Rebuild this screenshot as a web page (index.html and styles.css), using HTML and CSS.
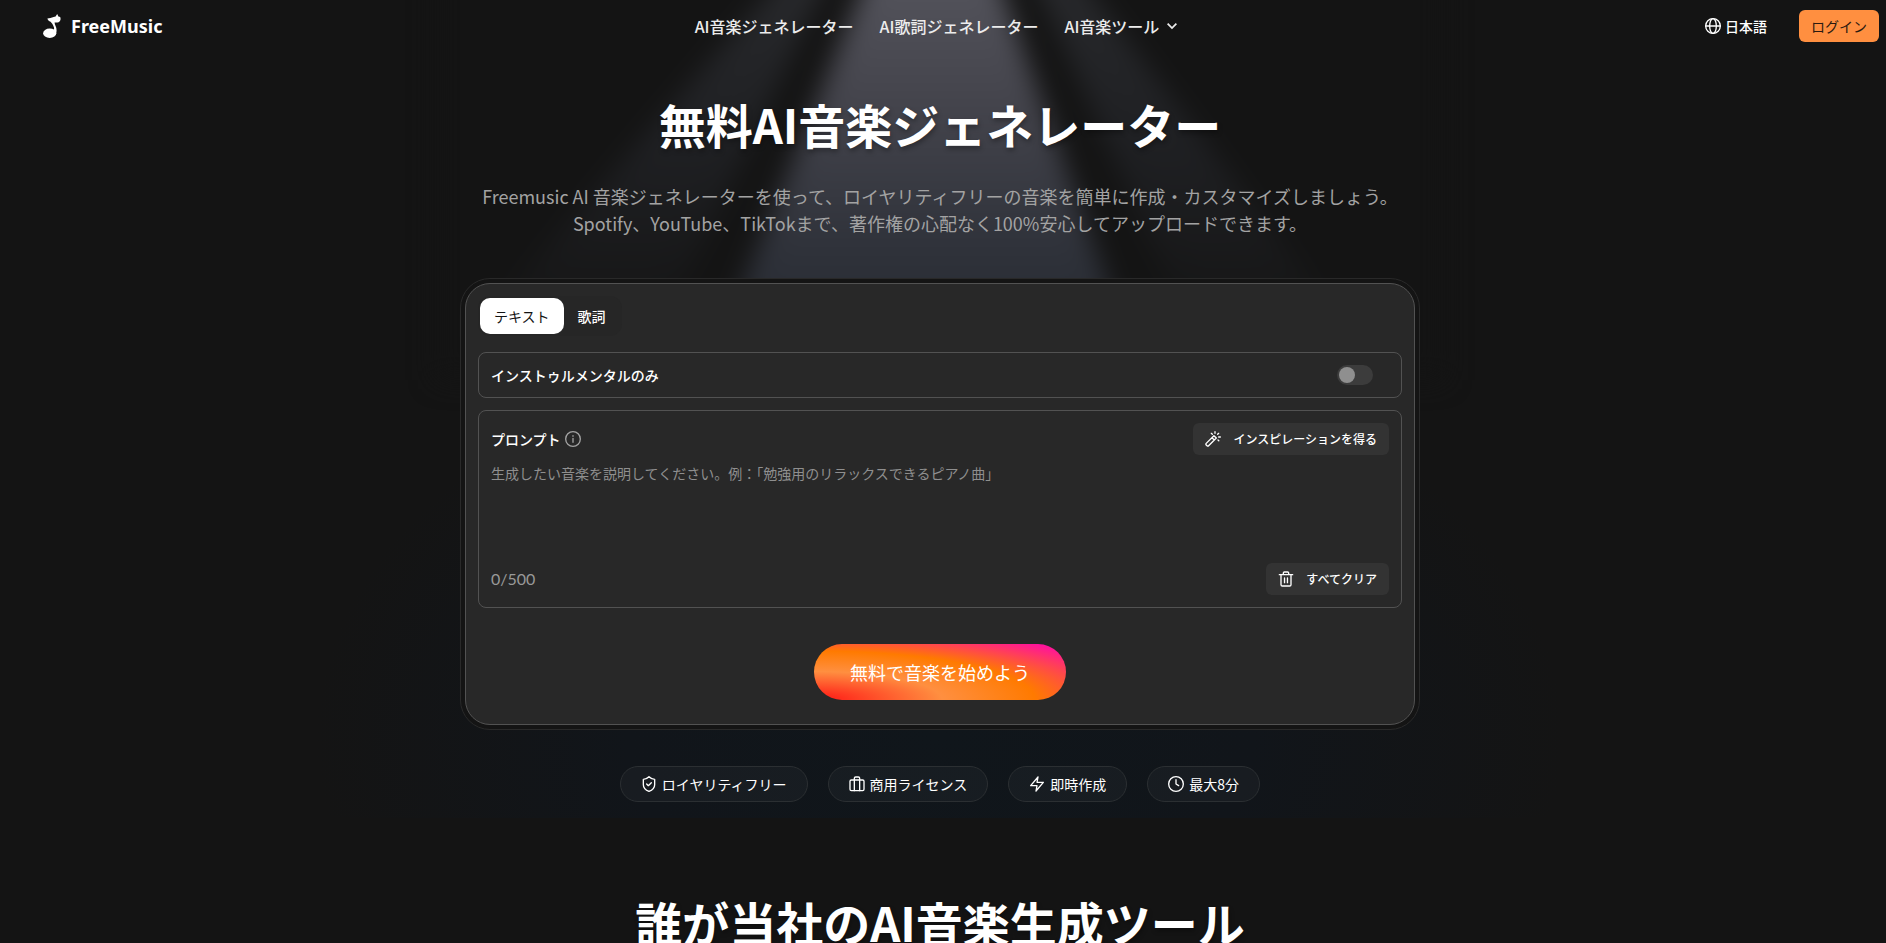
FILE: index.html
```html
<!DOCTYPE html>
<html lang="ja">
<head>
    <meta charset="UTF-8">
    <meta name="viewport" content="width=device-width, initial-scale=1.0">
    <title>FreeMusic</title>
    <link rel="stylesheet" href="styles.css">
</head>
<body>
    <!-- stage light behind the hero -->
    <svg class="stage-light" viewBox="0 0 1248 818" aria-hidden="true">
        <defs>
            <linearGradient id="beam" x1="0" y1="0" x2="0" y2="1">
                <stop offset="0" stop-color="#585860"/>
                <stop offset="0.35" stop-color="#45454d"/>
                <stop offset="0.7" stop-color="#2f323a"/>
                <stop offset="1" stop-color="#22262e"/>
            </linearGradient>
            <linearGradient id="side" x1="0" y1="0" x2="0" y2="1">
                <stop offset="0" stop-color="#2a2b2e"/>
                <stop offset="0.5" stop-color="#1f2023"/>
                <stop offset="1" stop-color="#141414"/>
            </linearGradient>
            <radialGradient id="floor" cx="0.5" cy="0.9" r="0.5">
                <stop offset="0" stop-color="#10161b"/>
                <stop offset="0.5" stop-color="#11151a"/>
                <stop offset="1" stop-color="#141414"/>
            </radialGradient>
            <filter id="soft" filterUnits="userSpaceOnUse" x="0" y="-60" width="1248" height="480" color-interpolation-filters="sRGB">
                <feGaussianBlur stdDeviation="13"/>
            </filter>
        </defs>
        <rect width="1248" height="818" fill="url(#floor)"/>
        <g filter="url(#soft)">
            <rect x="120" y="-60" width="1008" height="440" fill="#141414"/>
            <path d="M500 -60 L530 -60 L340 340 L150 340 Z" fill="url(#side)"/>
            <path d="M700 -60 L735 -60 L1040 340 L880 340 Z" fill="url(#side)"/>
            <path d="M566 -60 L668 -60 L826 380 L388 380 Z" fill="url(#beam)"/>
        </g>
    </svg>

    <header class="header">
        <a class="logo" href="#">
            <svg class="logo-icon" viewBox="0 0 18 24" fill="currentColor" aria-hidden="true">
                <ellipse cx="6.7" cy="19.2" rx="6.6" ry="4.7"/>
                <path d="M14.2 0 L15.4 2.4 L17.2 3 C18 5 17.6 7.4 15.6 8.2 C14 8.9 12.2 8.4 11.6 8.6 C11.4 11 13.8 13 13.6 16.4 C13.5 18.4 13.2 19.6 12 21 L9.5 15.5 C11.2 16 11.4 15 10.8 13 C10 10.4 8.6 9 7.6 7.8 C6 7.2 4.6 6 4.4 4.6 C6.6 4.4 8.4 3.6 10.6 3 L12.6 2.4 Z"/>
            </svg>
            <span>FreeMusic</span>
        </a>
        <nav class="nav">
            <a href="#">AI音楽ジェネレーター</a>
            <a href="#">AI歌詞ジェネレーター</a>
            <button type="button" class="nav-menu">AI音楽ツール
                <svg class="chevron" viewBox="0 0 24 24" aria-hidden="true"><path d="m4.500 8 7.500 7.500L19.500 8"/></svg>
            </button>
        </nav>
        <div class="account">
            <button type="button" class="language">
                <svg class="icon" viewBox="0 0 24 24" aria-hidden="true"><circle cx="12" cy="12" r="11"/><ellipse cx="12" cy="12" rx="5" ry="11"/><path d="M1 12h22"/></svg>
                日本語
            </button>
            <button type="button" class="login">ログイン</button>
        </div>
    </header>

    <main>
        <section class="hero">
            <h1 class="title">無料AI音楽ジェネレーター</h1>
            <p class="lead">Freemusic AI 音楽ジェネレーターを使って、ロイヤリティフリーの音楽を簡単に作成・カスタマイズしましょう。<br>Spotify、YouTube、TikTokまで、著作権の心配なく100%安心してアップロードできます。</p>

            <div class="card-ring">
                <form class="card">
                    <div class="tabs">
                        <button type="button" class="tab tab-active">テキスト</button>
                        <button type="button" class="tab">歌詞</button>
                    </div>

                    <div class="box option">
                        <label for="instrumental">インストゥルメンタルのみ</label>
                        <input type="checkbox" id="instrumental" class="switch">
                    </div>

                    <div class="box prompt">
                        <div class="prompt-row">
                            <div class="prompt-label">
                                <label for="prompt">プロンプト</label>
                                <svg class="icon" viewBox="0 0 24 24" aria-hidden="true"><circle cx="12" cy="12" r="11"/><path d="M12 11v6M12 7v1"/></svg>
                            </div>
                            <button type="button" class="tool">
                                <svg class="icon" viewBox="0 0 24 24" aria-hidden="true"><path d="M1.8 18.6 13.4 7 17 10.6 5.4 22.2a1.6 1.6 0 0 1-2.3 0l-1.3-1.3a1.6 1.6 0 0 1 0-2.3zM10.5 10l3.5 3.5M15 1v2.5M9.5 3.5l1.5 1.5M20.5 3.5 19 5M20.5 9H23M19.5 13.5l1.2 1.2"/></svg>
                                インスピレーションを得る
                            </button>
                        </div>
                        <textarea id="prompt" class="prompt-text" maxlength="500" placeholder="生成したい音楽を説明してください。例：「勉強用のリラックスできるピアノ曲」"></textarea>
                        <div class="prompt-row">
                            <span class="counter">0/500</span>
                            <button type="button" class="tool">
                                <svg class="icon" viewBox="0 0 24 24" aria-hidden="true"><path d="M2 5.5h20M4.5 5.5v15a2 2 0 0 0 2 2h11a2 2 0 0 0 2-2v-15M8 5V3a1.5 1.5 0 0 1 1.500-1.500h5A1.500 1.500 0 0 1 16 3v2M9.800 10.500v7M14.200 10.500v7"/></svg>
                                すべてクリア
                            </button>
                        </div>
                    </div>

                    <button type="submit" class="start">無料で音楽を始めよう</button>
                </form>
            </div>

            <ul class="chips">
                <li class="chip">
                    <svg class="icon" viewBox="0 0 24 24" aria-hidden="true"><path d="M20.500 13c0 5-3.500 8-8.500 10-5-2-8.500-5-8.500-10V5c3 0 6-1.500 8.500-4 2.500 2.500 5.500 4 8.500 4z"/><path d="m8.500 12 2.500 2.500 4.500-4.500"/></svg>
                    ロイヤリティフリー
                </li>
                <li class="chip">
                    <svg class="icon" viewBox="0 0 24 24" aria-hidden="true"><rect x="1.500" y="6" width="21" height="16" rx="2"/><path d="M8 22V3.500A2 2 0 0 1 10 1.500h4a2 2 0 0 1 2 2V22"/></svg>
                    商用ライセンス
                </li>
                <li class="chip">
                    <svg class="icon" viewBox="0 0 24 24" aria-hidden="true"><path d="M13.500 1.500 2.500 14.500H12L10.500 22.500 21.500 9.500H12z"/></svg>
                    即時作成
                </li>
                <li class="chip">
                    <svg class="icon" viewBox="0 0 24 24" aria-hidden="true"><circle cx="12" cy="12" r="11"/><path d="M12 5.500V12l4 2.500"/></svg>
                    最大8分
                </li>
            </ul>
        </section>

        <section class="audience">
            <h2 class="title">誰が当社のAI音楽生成ツール</h2>
        </section>
    </main>
</body>
</html>
```
FILE: styles.css
```css
:root {
    --bg: #141414;
    --card: #282828;
    --line: #525252;
    --accent: #ff8f40;
    --muted: #a3a3a3;
}

* {
    box-sizing: border-box;
}

body {
    position: relative;
    margin: 0 6px 0 0;
    height: 100vh;
    overflow: hidden;
    background: var(--bg);
    color: #fff;
    font-family: "Noto Sans CJK JP", sans-serif;
    font-size: 14px;
    line-height: 20px;
}

button {
    border: none;
    background: none;
    color: inherit;
    font: inherit;
    cursor: pointer;
}

a {
    color: inherit;
    text-decoration: none;
}

.stage-light {
    position: absolute;
    top: 0;
    left: 50%;
    width: 1248px;
    transform: translateX(-50%);
    z-index: -1;
}

.icon {
    width: 16px;
    height: 16px;
    flex: none;
    fill: none;
    stroke: currentColor;
    stroke-width: 2;
    stroke-linecap: round;
    stroke-linejoin: round;
}

/* header */
.header {
    display: grid;
    grid-template-columns: 1fr auto 1fr;
    align-items: center;
    height: 52px;
    padding: 0 1px 0 43px;
}

.logo {
    display: flex;
    align-items: center;
    gap: 10px;
    font-family: "Noto Sans", sans-serif;
    font-size: 18px;
    font-weight: 700;
}

.logo-icon {
    width: 18px;
    height: 24px;
}

.nav {
    display: flex;
    align-items: center;
    gap: 26px;
    margin-right: 48px;
    font-size: 16px;
    font-weight: 500;
    color: #ececec;
}

.nav-menu {
    display: flex;
    align-items: center;
    gap: 6px;
    padding: 0;
}

.chevron {
    width: 14px;
    height: 14px;
    fill: none;
    stroke: currentColor;
    stroke-width: 3;
}

.account {
    display: flex;
    justify-content: flex-end;
    align-items: center;
    gap: 32px;
}

.language {
    display: flex;
    align-items: center;
    gap: 4px;
    padding: 0;
    font-weight: 500;
}

.login {
    height: 32px;
    padding: 0 12px;
    border-radius: 6px;
    background: var(--accent);
    color: #2b1a10;
}

/* hero */
.hero {
    display: flex;
    flex-direction: column;
    align-items: center;
    padding: 44px 20px 0;
}

.title {
    margin: 0;
    font-size: 47px;
    font-weight: 700;
    line-height: 56px;
    text-align: center;
    text-shadow: 1px 3px 5px rgba(0, 0, 0, 0.3);
}

.lead {
    margin: 31px 0 41px;
    font-size: 18px;
    line-height: 27px;
    text-align: center;
    color: var(--muted);
}

.card-ring {
    width: 100%;
    max-width: 960px;
    padding: 4px;
    border: 1px solid #292929;
    border-radius: 30px;
    background: var(--bg);
}

.card {
    display: flex;
    flex-direction: column;
    padding: 12px 12px 24px;
    border: 1px solid var(--line);
    border-radius: 25px;
    background: var(--card);
}

.tabs {
    display: flex;
    align-self: flex-start;
    margin-bottom: 16px;
    padding: 2px;
    border-radius: 12px;
    background: #262626;
}

.tab {
    height: 36px;
    padding: 0 14px;
    border-radius: 10px;
    font-weight: 500;
}

.tab-active {
    background: #fff;
    color: #141414;
    font-weight: 400;
}

.box {
    border: 1px solid var(--line);
    border-radius: 8px;
    font-weight: 500;
}

.option {
    display: flex;
    justify-content: space-between;
    align-items: center;
    height: 46px;
    margin-bottom: 12px;
    padding: 0 28px 0 12px;
}

.switch {
    appearance: none;
    width: 36px;
    height: 20px;
    margin: 0;
    padding: 2px;
    border-radius: 10px;
    background: #3c3c3c;
}

.switch::before {
    content: '';
    display: block;
    width: 16px;
    height: 16px;
    border-radius: 50%;
    background: #8f8f8f;
}

.switch:checked::before {
    margin-left: auto;
    background: var(--accent);
}

.prompt {
    padding: 12px;
}

.prompt-row {
    display: flex;
    justify-content: space-between;
    align-items: center;
}

.prompt-label {
    display: flex;
    align-items: center;
    gap: 4px;
}

.prompt-label .icon {
    color: var(--muted);
}

.tool {
    display: flex;
    align-items: center;
    gap: 12px;
    height: 32px;
    padding: 0 12px;
    border-radius: 6px;
    background: #333;
    font-size: 12px;
    font-weight: 500;
}

.prompt-text {
    display: block;
    width: 100%;
    height: 108px;
    padding: 8px 0;
    border: none;
    outline: none;
    resize: none;
    background: none;
    color: #fff;
    font: inherit;
    font-weight: 400;
}

.prompt-text::placeholder {
    color: #8f8f8f;
}

.counter {
    font-family: Lato, sans-serif;
    font-size: 16px;
    font-weight: 400;
    color: #999;
}

.start {
    align-self: center;
    height: 56px;
    margin-top: 36px;
    padding: 0 36px;
    border-radius: 28px;
    background: radial-gradient(ellipse farthest-corner at 0 100%, #ff1414 0%, #ff8f40 36%, #ff7a00 62%, #ff00b8 100%);
    font-size: 18px;
}

.chips {
    display: flex;
    flex-wrap: wrap;
    justify-content: center;
    gap: 20px;
    margin: 36px 0 0;
    padding: 0;
    list-style: none;
}

.chip {
    display: flex;
    align-items: center;
    gap: 5px;
    height: 36px;
    padding: 0 20px;
    border: 1px solid #2b2f32;
    border-radius: 18px;
    background: rgba(255, 255, 255, 0.03);
}

.audience {
    padding: 92px 20px 0;
}
```
